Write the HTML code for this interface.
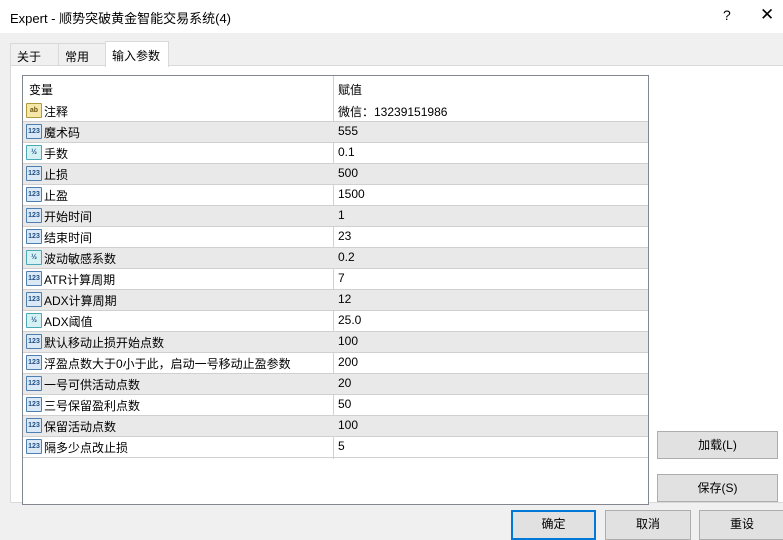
<!DOCTYPE html>
<html><head><meta charset="utf-8"><style>
*{margin:0;padding:0;box-sizing:border-box}
body{width:783px;height:533px;background:#f0f0f0;font-family:"Liberation Sans","Noto Sans CJK SC",sans-serif;font-size:12px;color:#000;position:relative;overflow:hidden}
.title{position:absolute;left:0;top:0;width:783px;height:33px;background:#fff}
.title .t{position:absolute;left:10px;top:8px;font-size:13px}
.tab{position:absolute;top:43px;height:23px;border:1px solid #d9d9d9;border-bottom:none;background:#f0f0f0;padding:4px 0 0 6px}
.panel{position:absolute;left:10px;top:65px;width:773px;height:438px;background:#fff;border:1px solid #d9d9d9;border-right:none}
.table{position:absolute;left:22px;top:75px;width:627px;height:430px;border:1px solid #828790;background:#fff}
.hdr{position:absolute;left:0;top:0;height:25px;width:625px}
.hdr span{position:absolute;top:5px}
.row{position:absolute;left:0;width:625px;height:21px;border-bottom:1px solid #d0d0d0}
.row.g{background:#e9e9e9}
.row .n{position:absolute;left:21px;top:2px}
.row .v{position:absolute;left:315px;top:2px}
.vl{position:absolute;left:310px;top:0;width:1px;height:383px;background:#d0d0d0}
.ic{position:absolute;left:3px;top:2px;width:16px;height:15px;border:1px solid #4f7fb0;background:#dbe8f6;border-radius:1px;font-size:7px;line-height:13px;text-align:center;color:#1d4f86;font-weight:bold}
.ic.h{background:#d6f1f4;border-color:#4aa9b4}
.ic.a{background:#f4e7a8;border-color:#b09a3b;color:#6a5410}
.btn{position:absolute;background:#e1e1e1;border:1px solid #adadad;text-align:center;font-size:12px}
</style></head><body>
<div class="title"><span class="t">Expert - 顺势突破黄金智能交易系统(4)</span>
<span style="position:absolute;left:723px;top:7px;font-size:14px">?</span>
<span style="position:absolute;left:760px;top:5px;font-size:17px">✕</span></div>
<div class="tab" style="left:10px;width:49px">关于</div>
<div class="tab" style="left:58px;width:48px">常用</div>
<div class="panel"></div>
<div class="tab" style="left:105px;top:41px;height:26px;width:64px;background:#fff;padding-top:5px">输入参数</div>
<div class="table">
<div class="hdr"><span style="left:6px">变量</span><span style="left:315px">赋值</span></div>
<div class="vl"></div>
<div class="row" style="top:25px"><span class="ic a">ab</span><span class="n">注释</span><span class="v">微信：13239151986</span></div>
<div class="row g" style="top:46px"><span class="ic">123</span><span class="n">魔术码</span><span class="v">555</span></div>
<div class="row" style="top:67px"><span class="ic h">½</span><span class="n">手数</span><span class="v">0.1</span></div>
<div class="row g" style="top:88px"><span class="ic">123</span><span class="n">止损</span><span class="v">500</span></div>
<div class="row" style="top:109px"><span class="ic">123</span><span class="n">止盈</span><span class="v">1500</span></div>
<div class="row g" style="top:130px"><span class="ic">123</span><span class="n">开始时间</span><span class="v">1</span></div>
<div class="row" style="top:151px"><span class="ic">123</span><span class="n">结束时间</span><span class="v">23</span></div>
<div class="row g" style="top:172px"><span class="ic h">½</span><span class="n">波动敏感系数</span><span class="v">0.2</span></div>
<div class="row" style="top:193px"><span class="ic">123</span><span class="n">ATR计算周期</span><span class="v">7</span></div>
<div class="row g" style="top:214px"><span class="ic">123</span><span class="n">ADX计算周期</span><span class="v">12</span></div>
<div class="row" style="top:235px"><span class="ic h">½</span><span class="n">ADX阈值</span><span class="v">25.0</span></div>
<div class="row g" style="top:256px"><span class="ic">123</span><span class="n">默认移动止损开始点数</span><span class="v">100</span></div>
<div class="row" style="top:277px"><span class="ic">123</span><span class="n">浮盈点数大于0小于此，启动一号移动止盈参数</span><span class="v">200</span></div>
<div class="row g" style="top:298px"><span class="ic">123</span><span class="n">一号可供活动点数</span><span class="v">20</span></div>
<div class="row" style="top:319px"><span class="ic">123</span><span class="n">三号保留盈利点数</span><span class="v">50</span></div>
<div class="row g" style="top:340px"><span class="ic">123</span><span class="n">保留活动点数</span><span class="v">100</span></div>
<div class="row" style="top:361px"><span class="ic">123</span><span class="n">隔多少点改止损</span><span class="v">5</span></div>
</div>
<div class="btn" style="left:657px;top:431px;width:121px;height:28px;line-height:26px">加载(L)</div>
<div class="btn" style="left:657px;top:474px;width:121px;height:28px;line-height:26px">保存(S)</div>
<div class="btn" style="left:511px;top:510px;width:85px;height:30px;line-height:24px;border:2px solid #0078d7">确定</div>
<div class="btn" style="left:605px;top:510px;width:86px;height:30px;line-height:26px">取消</div>
<div class="btn" style="left:699px;top:510px;width:86px;height:30px;line-height:26px">重设</div>
</body></html>
